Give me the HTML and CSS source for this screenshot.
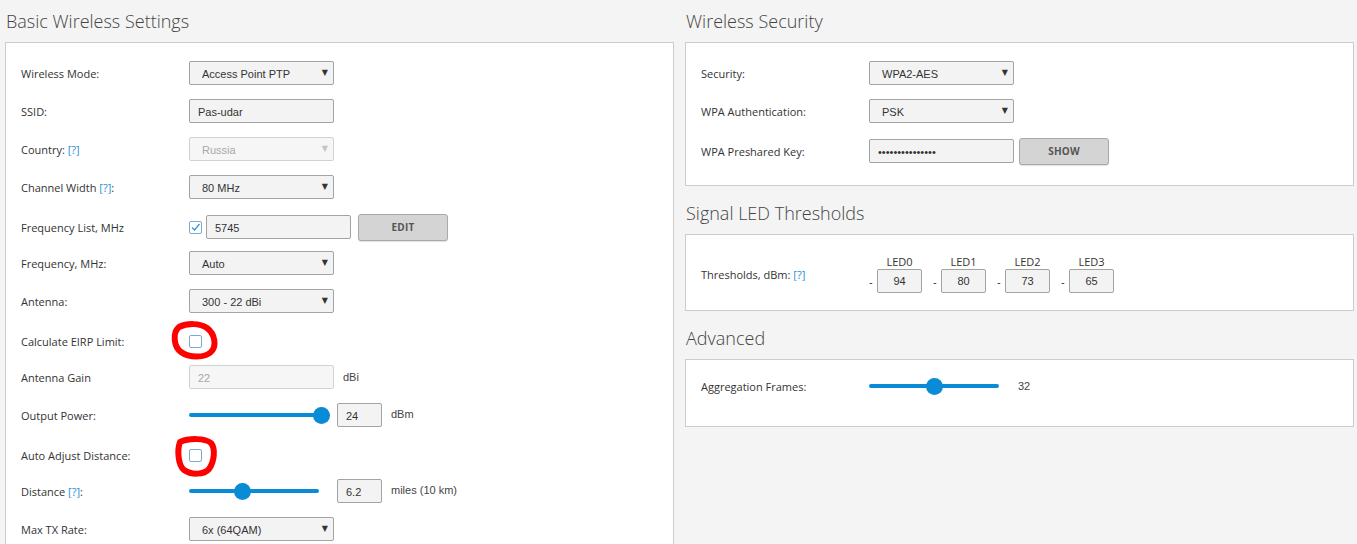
FILE: index.html
```html
<!DOCTYPE html>
<html>
<head>
  <title>Wireless</title>
  <link rel="stylesheet" href="styles.css">
</head>
<body>
  <div class="page">
    <div class="column">
      <h2>Basic Wireless Settings</h2>
      <div class="panel basic">
        <div class="row">
          <label class="name">Wireless Mode:</label>
          <div class="select"><select><option>Access Point PTP</option></select></div>
        </div>
        <div class="row">
          <label class="name">SSID:</label>
          <input type="text" class="text" value="Pas-udar">
        </div>
        <div class="row">
          <label class="name">Country: <a href="#">[?]</a></label>
          <div class="select disabled"><select disabled><option>Russia</option></select></div>
        </div>
        <div class="row">
          <label class="name">Channel Width <a href="#">[?]</a>:</label>
          <div class="select"><select><option>80 MHz</option></select></div>
        </div>
        <div class="row nudge">
          <label class="name">Frequency List, MHz</label>
          <span class="check checked">
            <svg width="11" height="11" viewBox="0 0 11 11"><path d="M2 5.5 L4.5 8 L9.5 2" fill="none" stroke="#3f8fd2" stroke-width="1.3"/></svg>
          </span>
          <input type="text" class="text freq" value="5745">
          <button class="btn">EDIT</button>
        </div>
        <div class="row">
          <label class="name">Frequency, MHz:</label>
          <div class="select"><select><option>Auto</option></select></div>
        </div>
        <div class="row">
          <label class="name">Antenna:</label>
          <div class="select"><select><option>300 - 22 dBi</option></select></div>
        </div>
        <div class="row nudge">
          <label class="name">Calculate EIRP Limit:</label>
          <span class="check">
            <svg class="scribble one" width="50" height="40" viewBox="0 0 50 40"><path d="M9 6 C17 2 30 2 37 7 C45 13 47 25 41 31 C35 37 19 37 11 31 C4 26 2 12 9 6 Z"/></svg>
          </span>
        </div>
        <div class="row">
          <label class="name">Antenna Gain</label>
          <input type="text" class="text" value="22" disabled>
          <span class="unit">dBi</span>
        </div>
        <div class="row">
          <label class="name">Output Power:</label>
          <input type="range" class="range" min="0" max="24" value="24">
          <input type="text" class="text small" value="24">
          <span class="unit raised">dBm</span>
        </div>
        <div class="row nudge">
          <label class="name">Auto Adjust Distance:</label>
          <span class="check">
            <svg class="scribble two" width="46" height="44" viewBox="0 0 46 44"><path d="M8 7 C17 3 33 3 39 8 C44 14 42 27 37 34 C32 40 19 40 12 35 C6 30 5 15 8 7 Z"/></svg>
          </span>
        </div>
        <div class="row">
          <label class="name">Distance <a href="#">[?]</a>:</label>
          <input type="range" class="range short" min="0" max="100" value="40">
          <input type="text" class="text small" value="6.2">
          <span class="unit raised">miles (10 km)</span>
        </div>
        <div class="row">
          <label class="name">Max TX Rate:</label>
          <div class="select"><select><option>6x (64QAM)</option></select></div>
        </div>
      </div>
    </div>

    <div class="column">
      <h2>Wireless Security</h2>
      <div class="panel security">
        <div class="row">
          <label class="name">Security:</label>
          <div class="select"><select><option>WPA2-AES</option></select></div>
        </div>
        <div class="row">
          <label class="name">WPA Authentication:</label>
          <div class="select"><select><option>PSK</option></select></div>
        </div>
        <div class="row nudge">
          <label class="name">WPA Preshared Key:</label>
          <input type="password" class="text" value="passudar1234567">
          <button class="btn show">SHOW</button>
        </div>
      </div>

      <h2 class="next">Signal LED Thresholds</h2>
      <div class="panel leds">
        <div class="row auto">
          <label class="name">Thresholds, dBm: <a href="#">[?]</a></label>
          <div class="led-list">
            <div class="led"><span class="dash">-</span><div class="led-box"><span>LED0</span><input type="text" value="94"></div></div>
            <div class="led"><span class="dash">-</span><div class="led-box"><span>LED1</span><input type="text" value="80"></div></div>
            <div class="led"><span class="dash">-</span><div class="led-box"><span>LED2</span><input type="text" value="73"></div></div>
            <div class="led"><span class="dash">-</span><div class="led-box"><span>LED3</span><input type="text" value="65"></div></div>
          </div>
        </div>
      </div>

      <h2 class="next">Advanced</h2>
      <div class="panel advanced">
        <div class="row">
          <label class="name">Aggregation Frames:</label>
          <input type="range" class="range short" min="1" max="63" value="32">
          <span class="unit close">32</span>
        </div>
      </div>
    </div>
  </div>
</body>
</html>
```

FILE: styles.css
```css
body {
  margin: 0;
  background-color: #f4f4f4;
  font-family: "Open Sans", "Liberation Sans", sans-serif;
  font-size: 11px;
  color: #333;
}

.page {
  display: grid;
  grid-template-columns: 1fr 1fr;
  column-gap: 11px;
  padding: 0 3px 0 5px;
}

h2 {
  margin: 0;
  padding: 10px 1px 10px;
  font-size: 18px;
  font-weight: 300;
  line-height: 22px;
  color: #444;
}

h2.next {
  margin-top: 6px;
}

.panel {
  background-color: #fff;
  border: 1px solid #ccc;
  padding: 11px 15px 14px;
}

.panel.security {
  padding-bottom: 17px;
}

.panel.basic {
  padding-bottom: 40px;
}

.panel.leds {
  padding: 21px 15px 17px;
}

.panel.advanced {
  padding: 7px 15px 21px;
}

.row {
  display: flex;
  align-items: center;
  height: 38px;
}

.row.auto {
  height: auto;
}

.row.nudge {
  margin: 2px 0 -2px;
}

.name {
  width: 168px;
  flex: none;
}

.name a {
  color: #1e90d8;
  text-decoration: none;
}

.select {
  position: relative;
  width: 145px;
}

.select::after {
  content: "\25BC";
  position: absolute;
  right: 6px;
  top: 7px;
  font-family: "DejaVu Sans", sans-serif;
  font-size: 8px;
  color: #333;
  pointer-events: none;
}

.select select {
  -webkit-appearance: none;
  appearance: none;
  width: 145px;
  height: 24px;
  margin: 0;
  padding: 1px 0 0 12px;
  border: 1px solid #a3a3a3;
  border-radius: 2px;
  background-color: #f3f3f3;
  font-family: "Liberation Sans", Arial, sans-serif;
  font-size: 11px;
  color: #333;
}

.select.disabled::after {
  color: #c4c4c4;
}

.select.disabled select {
  border-color: #d2d2d2;
  background-color: #f6f6f6;
  color: #a8a8a8;
  opacity: 1;
}

.text {
  box-sizing: border-box;
  width: 145px;
  height: 24px;
  margin: 0;
  padding: 1px 0 0 8px;
  border: 1px solid #a3a3a3;
  border-radius: 2px;
  background-color: #f3f3f3;
  font-family: "Liberation Sans", Arial, sans-serif;
  font-size: 11px;
  color: #333;
}

.text:disabled {
  border-color: #d2d2d2;
  background-color: #f6f6f6;
  color: #a8a8a8;
}

.text.freq {
  margin-left: 4px;
}

.text.small {
  width: 45px;
}

.unit {
  margin-left: 9px;
  font-family: "Liberation Sans", Arial, sans-serif;
  color: #444;
}

.unit.raised {
  margin-top: -3px;
}

.unit.close {
  margin-left: 1px;
}

.btn {
  box-sizing: border-box;
  width: 90px;
  height: 27px;
  margin-left: 7px;
  padding: 0;
  border: 1px solid #a9a9a9;
  border-radius: 3px;
  background-color: #d4d4d4;
  box-shadow: 0 1px 1px rgba(0, 0, 0, 0.12);
  font-family: "Open Sans", sans-serif;
  font-size: 10px;
  font-weight: bold;
  letter-spacing: 0.2px;
  color: #555;
}

.btn.show {
  margin-left: 5px;
}

.check {
  position: relative;
  box-sizing: border-box;
  display: inline-flex;
  width: 13px;
  height: 13px;
  border: 1px solid #7ea9d1;
  border-radius: 2px;
  background-color: #fff;
}

.check svg {
  display: block;
}

.scribble {
  position: absolute;
  overflow: visible;
}

.scribble path {
  fill: none;
  stroke: #ff0000;
  stroke-width: 6;
  stroke-linejoin: round;
}

.scribble.one {
  left: -20px;
  top: -15px;
}

.scribble.two {
  left: -18px;
  top: -15px;
}

.range {
  -webkit-appearance: none;
  appearance: none;
  width: 141px;
  height: 18px;
  margin: 0 7px 0 0;
  padding: 0;
  background: transparent;
}

.range.short {
  width: 130px;
  margin-right: 18px;
}

.range::-webkit-slider-runnable-track {
  height: 4px;
  border-radius: 2px;
  background-color: #0a8bd5;
}

.range::-webkit-slider-thumb {
  -webkit-appearance: none;
  width: 17px;
  height: 17px;
  margin-top: -6.5px;
  border: none;
  border-radius: 50%;
  background-color: #0a8bd5;
}

.led-list {
  display: flex;
  gap: 11px;
}

.led {
  display: flex;
  align-items: flex-end;
}

.dash {
  width: 8px;
  padding-bottom: 5px;
  font-family: "Liberation Sans", Arial, sans-serif;
}

.led-box {
  display: flex;
  flex-direction: column;
  align-items: center;
}

.led-box span {
  line-height: 12px;
  margin-bottom: 1px;
}

.led-box input {
  box-sizing: border-box;
  width: 45px;
  height: 24px;
  margin: 0;
  border: 1px solid #a3a3a3;
  border-radius: 2px;
  background-color: #f3f3f3;
  text-align: center;
  font-family: "Liberation Sans", Arial, sans-serif;
  font-size: 11px;
  color: #333;
}
```
